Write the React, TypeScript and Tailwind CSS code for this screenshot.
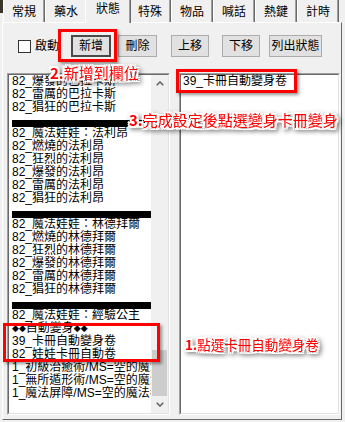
import type { ReactNode } from "react"

const tabs = ["常規", "藥水", "狀態", "特殊", "物品", "喊話", "熱鍵", "計時"]

// null = black separator row
const leftItems: (string | null)[] = [
  "82_爆發的巴拉卡斯",
  "82_雷厲的巴拉卡斯",
  "82_猖狂的巴拉卡斯",
  null,
  "82_魔法娃娃：法利昂",
  "82_燃燒的法利昂",
  "82_狂烈的法利昂",
  "82_爆發的法利昂",
  "82_雷厲的法利昂",
  "82_猖狂的法利昂",
  null,
  "82_魔法娃娃：林德拜爾",
  "82_燃燒的林德拜爾",
  "82_狂烈的林德拜爾",
  "82_爆發的林德拜爾",
  "82_雷厲的林德拜爾",
  "82_猖狂的林德拜爾",
  null,
  "82_魔法娃娃：經驗公主",
  "◆◆自動變身◆◆",
  "39_卡冊自動變身卷",
  "82_娃娃卡冊自動卷",
  "1_初級治癒術/MS=空的魔法卷軸",
  "1_無所遁形術/MS=空的魔法卷軸",
  "1_魔法屏障/MS=空的魔法卷軸",
]

function Row({ text }: { text: string | null }) {
  if (text === null) {
    return (
      <div className="h-[13px] pt-[6px]">
        <div className="h-[7px] bg-black" />
      </div>
    )
  }
  if (text.startsWith("◆")) {
    return (
      <div className="h-[13px] leading-[13px] whitespace-nowrap flex items-center">
        <span className="font-['DejaVu_Sans'] text-[9px]">◆◆</span>
        <span>自動變身</span>
        <span className="font-['DejaVu_Sans'] text-[9px]">◆◆</span>
      </div>
    )
  }
  return <div className="h-[13px] leading-[13px] whitespace-nowrap">{text}</div>
}

function Sunken({ className, children }: { className: string; children: ReactNode }) {
  return (
    <div className={`border border-t-[#a0a0a0] border-l-[#a0a0a0] border-b-white border-r-white ${className}`}>
      <div className="h-full border border-t-[#696969] border-l-[#696969] border-b-[#e3e3e3] border-r-[#e3e3e3] bg-white">
        {children}
      </div>
    </div>
  )
}

function Btn({ label, className, primary }: { label: string; className: string; primary?: boolean }) {
  return (
    <div
      className={`h-[22px] flex items-center justify-center bg-[#e1e1e1] ${
        primary ? "border-2 border-[#4a4a4a]" : "border border-[#adadad]"
      } ${className}`}
    >
      {label}
    </div>
  )
}

function Note({ children, className }: { children: ReactNode; className: string }) {
  return (
    <div
      className={`absolute whitespace-nowrap text-[#ff0000] leading-none [text-shadow:-2px_0_0_#fff,2px_0_0_#fff,0_-2px_0_#fff,0_2px_0_#fff,-2px_-2px_0_#fff,2px_2px_0_#fff,-2px_2px_0_#fff,2px_-2px_0_#fff] [filter:drop-shadow(2px_2px_2px_rgba(0,0,0,0.45))] ${className}`}
    >
      {children}
    </div>
  )
}

function Chevron({ up }: { up?: boolean }) {
  return (
    <svg width="8" height="5" viewBox="0 0 8 5">
      <path
        d={up ? "M0.7 4.3 L4 1 L7.3 4.3" : "M0.7 0.7 L4 4 L7.3 0.7"}
        fill="none"
        stroke="#606060"
        strokeWidth="1.5"
      />
    </svg>
  )
}

export default function App() {
  return (
    <div className="relative w-[345px] h-[422px] overflow-hidden bg-[#f0f0f0] text-[12px] text-black font-['Liberation_Sans','Noto_Sans_CJK_TC',sans-serif]">
      <div className="absolute left-0 top-0 w-[3px] h-[13px] bg-[#3a332e]" />

      {/* Tab strip */}
      <div className="flex h-[22px] pl-[3px]">
        {tabs.map((t) =>
          t === "狀態" ? (
            <div
              key={t}
              className="relative z-10 -mx-[2px] w-[46px] h-[23px] pb-[5px] flex items-center justify-center bg-[#f0f0f0] border-l border-l-white border-r border-r-[#696969] shadow-[inset_-1px_0_0_#a0a0a0]"
            >
              {t}
            </div>
          ) : (
            <div
              key={t}
              className="w-[42px] h-[22px] pt-[2px] flex items-center justify-center border-l border-l-white border-r border-r-[#696969] shadow-[inset_-1px_0_0_#a0a0a0]"
            >
              {t}
            </div>
          )
        )}
      </div>

      {/* Tab panel */}
      <div className="ml-[2px] w-[340px] h-[398px] border border-t-white border-l-white border-r-[#696969] border-b-[#696969] pt-[12px]">
        {/* Buttons */}
        <div className="flex items-center h-[22px]">
          <div className="ml-[15px] w-[13px] h-[13px] bg-white border border-[#333]" />
          <span className="ml-[4px]">啟動</span>
          <Btn label="新增" primary className="ml-[12px] w-[40px]" />
          <Btn label="刪除" className="ml-[7px] w-[39px]" />
          <Btn label="上移" className="ml-[14px] w-[38px]" />
          <Btn label="下移" className="ml-[13px] w-[38px]" />
          <Btn label="列出狀態" className="ml-[9px] w-[53px]" />
        </div>

        {/* Lists */}
        <div className="flex mt-[16px]">
          <Sunken className="ml-[4px] w-[163px] h-[342px]">
            <div className="flex h-full">
              <div className="flex-1 overflow-hidden pl-[3px]">
                {leftItems.map((it, i) => (
                  <Row key={i} text={it} />
                ))}
              </div>
              <div className="w-[17px] flex flex-col bg-[#f0f0f0]">
                <div className="h-[17px] flex items-center justify-center">
                  <Chevron up />
                </div>
                <div className="flex-1 flex flex-col justify-end">
                  <div className="mx-[1px] h-[46px] bg-[#cdcdcd]" />
                </div>
                <div className="h-[17px] flex items-center justify-center">
                  <Chevron />
                </div>
              </div>
            </div>
          </Sunken>

          <Sunken className="ml-[9px] w-[161px] h-[342px]">
            <div className="pl-[2px]">
              <Row text="39_卡冊自動變身卷" />
            </div>
          </Sunken>
        </div>
      </div>

      {/* Annotations */}
      <div className="absolute left-[58px] top-[29px] w-[59px] h-[33px] border-[3px] border-[#ff0000] shadow-[2px_2px_3px_rgba(0,0,0,0.4)]" />
      <div className="absolute left-[176px] top-[69px] w-[121px] h-[24px] border-[3px] border-[#ff0000] shadow-[2px_2px_3px_rgba(0,0,0,0.4)]" />
      <div className="absolute left-[3px] top-[323px] w-[157px] h-[39px] border-[3px] border-[#ff0000] shadow-[2px_2px_3px_rgba(0,0,0,0.4)]" />

      <Note className="left-[50px] top-[65px] text-[15px] font-['Noto_Sans_CJK_TC',sans-serif]">
        <b>2.</b>新增到欄位
      </Note>
      <Note className="left-[129px] top-[112px] text-[15px] font-['Noto_Sans_CJK_TC',sans-serif]">
        <b>3.</b>完成設定後點選變身卡冊變身
      </Note>
      <Note className="left-[185px] top-[338px] text-[13.5px] font-['Noto_Sans_CJK_TC',sans-serif]">
        <b>1.</b>點選卡冊自動變身卷
      </Note>
    </div>
  )
}
